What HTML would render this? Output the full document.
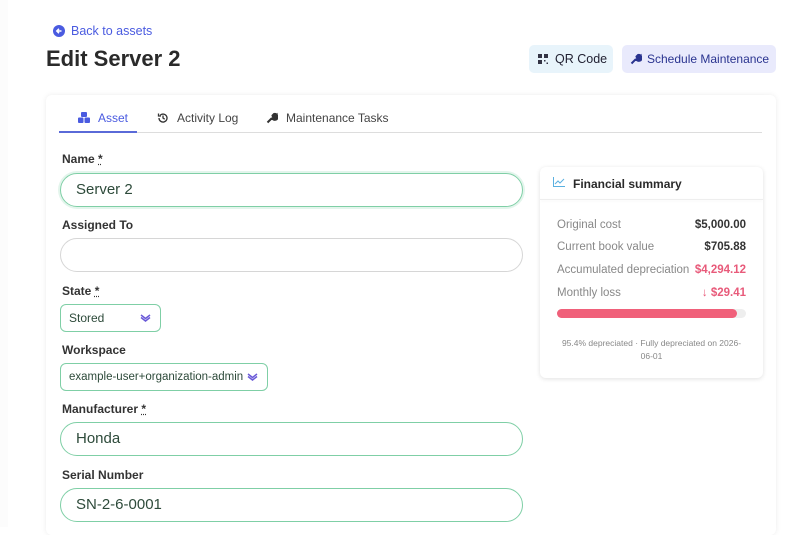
<!DOCTYPE html>
<html><head><style>
*{box-sizing:border-box;margin:0;padding:0}
body{width:800px;height:527px;overflow:hidden;background:#fff;font-family:"Liberation Sans",sans-serif;position:relative;color:#222}
.a{position:absolute;white-space:nowrap}
.lbl{position:absolute;left:62px;font-size:12px;font-weight:bold;color:#333}
.inp{position:absolute;left:60px;width:463px;height:34px;border:1px solid #d6d6d6;border-radius:17px;font-size:15px;color:#2d4a3a;padding-left:15px;line-height:32px}
.g{border-color:#7fcfa6;box-shadow:0 0 0 2px #e3f5ec}
.sel{position:absolute;left:60px;height:28px;border:1px solid #7fcfa6;border-radius:6px;font-size:12px;color:#2d4a3a;padding-left:8px;line-height:26px;white-space:nowrap}
.chev{position:absolute;right:9px;top:9px}
.row{position:absolute;left:557px;width:189px;font-size:11.5px;color:#888;display:flex;justify-content:space-between;white-space:nowrap}
.row b{color:#333}
</style></head><body>
<div class="a" style="left:0;top:0;width:8px;height:527px;background:#fcfcfc"></div>
<svg class="a" style="left:53px;top:25px" width="12" height="12" viewBox="0 0 12 12"><circle cx="6" cy="6" r="6" fill="#4a5be0"/><path d="M8.5 6H4M6 3.8L3.8 6 6 8.2" stroke="#fff" stroke-width="1.5" fill="none"/></svg>
<div class="a" style="left:71px;top:24px;font-size:12.5px;color:#4a5be0">Back to assets</div>
<div class="a" style="left:46px;top:46px;font-size:22px;font-weight:bold;color:#2a2a2a">Edit Server 2</div>
<div class="a" style="left:529px;top:45px;width:84px;height:28px;background:#e8f4fb;border-radius:5px;font-size:12.5px;color:#223;line-height:28px;padding-left:26px">QR Code</div>
<svg class="a" style="left:538px;top:54px" width="10" height="10" viewBox="0 0 10 10" fill="#334"><rect x="0" y="0" width="4" height="4"/><rect x="6" y="0" width="4" height="4"/><rect x="0" y="6" width="4" height="4"/><rect x="6" y="6" width="1.5" height="1.5"/><rect x="8.5" y="8.5" width="1.5" height="1.5"/></svg>
<div class="a" style="left:622px;top:45px;width:154px;height:28px;background:#e9eafc;border-radius:5px;font-size:12px;color:#2a3490;line-height:28px;padding-left:25px">Schedule Maintenance</div>
<svg class="a" style="left:630px;top:53px" width="12" height="12" viewBox="0 0 12 12"><path d="M1.5 10.5L6 6M6 6a3 3 0 1 0 2-4l-1.5 1.5 .5 1.5 1.5.5L10 4a3 3 0 0 1-4 2" stroke="#2a3490" stroke-width="2" fill="#2a3490"/></svg>
<div class="a" style="left:46px;top:95px;width:730px;height:440px;background:#fff;border-radius:6px;box-shadow:0 0 6px rgba(0,0,0,.08)"></div>
<div class="a" style="left:60px;top:132px;width:702px;height:1px;background:#ddd"></div>
<div class="a" style="left:59px;top:131px;width:78px;height:2px;background:#5a6ad8"></div>
<svg class="a" style="left:78px;top:112px" width="12" height="11" viewBox="0 0 12 11" fill="#4a5be0"><rect x="3" y="0" width="6" height="5" rx="1"/><rect x="0" y="5.5" width="5.5" height="5.5" rx="1"/><rect x="6.5" y="5.5" width="5.5" height="5.5" rx="1"/></svg>
<div class="a" style="left:98px;top:111px;font-size:12px;color:#4a5be0">Asset</div>
<svg class="a" style="left:157px;top:112px" width="12" height="12" viewBox="0 0 12 12" fill="none" stroke="#333" stroke-width="1.3"><path d="M2 6a4 4 0 1 0 1.2-2.8M1.5 1.5v2.5H4M6 3.5V6l1.7 1.2"/></svg>
<div class="a" style="left:177px;top:111px;font-size:12px;color:#444">Activity Log</div>
<svg class="a" style="left:266px;top:112px" width="12" height="12" viewBox="0 0 12 12"><path d="M1.5 10.5L6 6M6 6a3 3 0 1 0 2-4l-1.5 1.5 .5 1.5 1.5.5L10 4a3 3 0 0 1-4 2" stroke="#333" stroke-width="2" fill="#333"/></svg>
<div class="a" style="left:286px;top:111px;font-size:12px;color:#444">Maintenance Tasks</div>

<div class="lbl" style="top:152px">Name <u style="text-decoration-style:dotted">*</u></div>
<div class="inp g" style="top:173px">Server 2</div>
<div class="lbl" style="top:218px">Assigned To</div>
<div class="inp" style="top:238px"></div>
<div class="lbl" style="top:284px">State <u style="text-decoration-style:dotted">*</u></div>
<div class="sel" style="top:304px;width:101px">Stored<svg class="chev" width="11" height="8" viewBox="0 0 11 8"><path d="M1 1l4.5 3.5L10 1M1 3.5l4.5 3.5L10 3.5" stroke="#6a5ad8" stroke-width="1.5" fill="none"/></svg></div>
<div class="lbl" style="top:343px">Workspace</div>
<div class="sel" style="top:363px;width:208px;font-size:11.5px">example-user+organization-admin<svg class="chev" width="11" height="8" viewBox="0 0 11 8"><path d="M1 1l4.5 3.5L10 1M1 3.5l4.5 3.5L10 3.5" stroke="#6a5ad8" stroke-width="1.5" fill="none"/></svg></div>
<div class="lbl" style="top:402px">Manufacturer <u style="text-decoration-style:dotted">*</u></div>
<div class="inp g" style="top:422px;box-shadow:none">Honda</div>
<div class="lbl" style="top:468px">Serial Number</div>
<div class="inp g" style="top:488px;box-shadow:none">SN-2-6-0001</div>

<div class="a" style="left:540px;top:167px;width:223px;height:211px;background:#fff;border-radius:6px;box-shadow:0 1px 5px rgba(0,0,0,.12)"></div>
<div class="a" style="left:540px;top:199px;width:223px;height:1px;background:#eee;box-shadow:0 1px 3px rgba(0,0,0,.06)"></div>
<svg class="a" style="left:553px;top:177px" width="12" height="10" viewBox="0 0 12 10" fill="none" stroke="#5ab0e0" stroke-width="1"><path d="M.5 0v9.5H12M2 7l3-3 2 2 4-4"/></svg>
<div class="a" style="left:573px;top:177px;font-size:12px;font-weight:bold;color:#2a2a2a">Financial summary</div>
<div class="row" style="top:219px"><span>Original cost</span><b>$5,000.00</b></div>
<div class="row" style="top:241px"><span>Current book value</span><b>$705.88</b></div>
<div class="row" style="top:264px"><span>Accumulated depreciation</span><b style="color:#e85a7a">$4,294.12</b></div>
<div class="row" style="top:287px"><span>Monthly loss</span><b style="color:#e85a7a">↓ $29.41</b></div>
<div class="a" style="left:557px;top:309px;width:189px;height:9px;background:#eee;border-radius:5px"><div style="width:180px;height:9px;background:#f0607a;border-radius:5px"></div></div>
<div class="a" style="left:557px;top:337px;width:189px;font-size:8.5px;color:#888;text-align:center;line-height:13px;white-space:normal">95.4% depreciated · Fully depreciated on 2026-06-01</div>
</body></html>
